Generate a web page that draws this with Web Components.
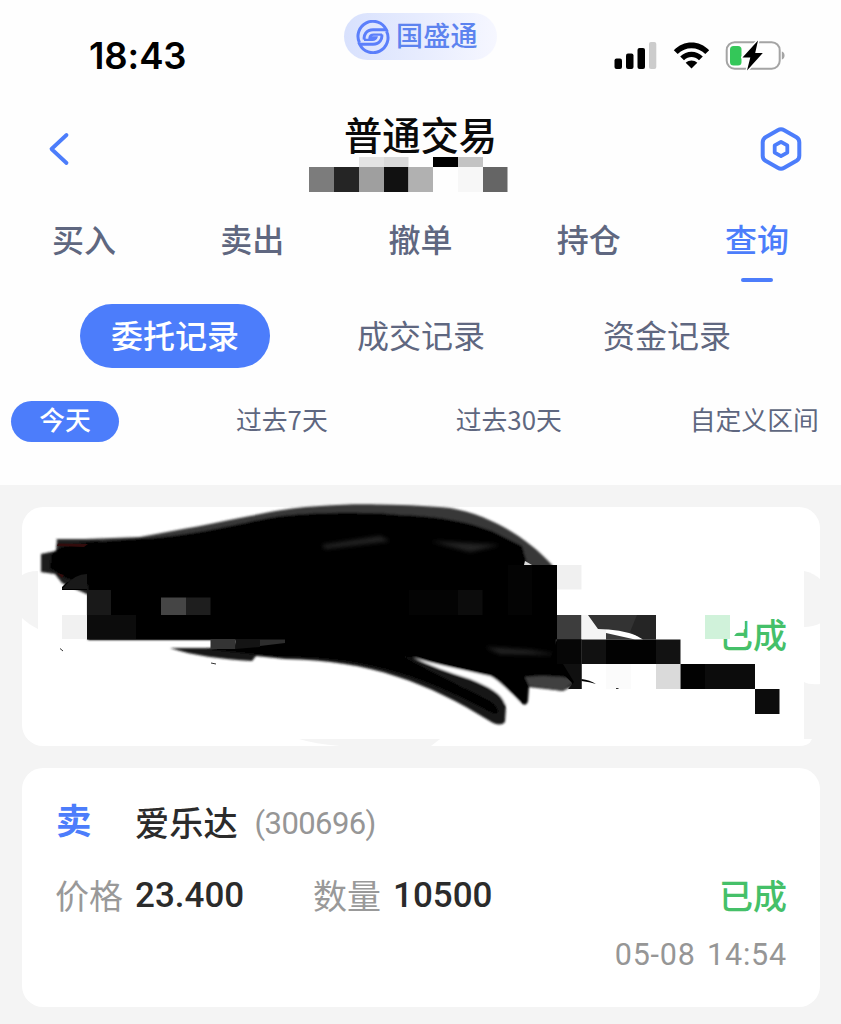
<!DOCTYPE html>
<html lang="zh-CN">
<head>
<meta charset="utf-8">
<title>普通交易</title>
<style>
  html, body { margin: 0; background: #f4f4f4; }
  body { width: 841px; height: 1024px; overflow: hidden; font-family: "Noto Sans CJK SC", sans-serif; }
</style>
</head>
<body>
<trade-app></trade-app>
<script>
/** <status-bar> — phone clock, brand pill and signal / wifi / battery. */
class StatusBar extends HTMLElement {
  constructor() { super(); this.attachShadow({ mode: "open" }); }
  connectedCallback() {
    this.shadowRoot.innerHTML = `
      <style>
        :host{display:grid;grid-template-columns:344px 153px 1fr;height:92px;box-sizing:border-box}
        .time{padding:34px 0 0 89px;font:600 36.5px/44px Inter,sans-serif;letter-spacing:-.1px;color:#000}
        .brand{display:flex;align-items:center;box-sizing:border-box;height:47px;margin-top:13px;padding-left:12px;gap:6px;border-radius:24px;
          background:linear-gradient(90deg,#d8e1fd,#e7ecfe 50%,#f6f7ff);color:#5d83ef;font-size:27px;font-weight:500;line-height:40px}
        .brand span{margin-top:-4px;letter-spacing:.3px}
        .icons{display:flex;align-items:flex-start;padding:41px 0 0 117px}
        svg{display:block}
        .wifi{margin-left:16px}.bat{margin-left:15px}
      </style>
      <div class="time">${this.getAttribute("time")}</div>
      <div class="brand">
        <svg width="34" height="34" viewBox="0 0 34 34" fill="none" stroke="#5b7ffb" stroke-width="3">
          <path d="M3.500 22.800A14.900 14.900 0 0 1 30.300 9.700H17C10 9.700 7.500 15.500 8.300 19.500"/>
          <path d="M3.500 22.800A14.900 14.900 0 0 1 30.300 9.700H17C10 9.700 7.500 15.500 8.300 19.500" transform="rotate(180 17 17)"/>
          <path stroke-width="2.300" d="M26 14.600H17.500C14.800 14.600 13.800 16 13.600 17.500H20.400C20 18.900 19.200 19.800 16.500 19.800H8"/>
        </svg>
        <span><slot></slot></span>
      </div>
      <div class="icons">
        <svg width="43" height="29" viewBox="0 0 43 29">
          <rect x="0.5" y="17.5" width="7.5" height="10.5" rx="2"/>
          <rect x="12" y="12.5" width="7.5" height="15.5" rx="2"/>
          <rect x="23.5" y="7" width="7.5" height="21" rx="2"/>
          <rect x="35" y="1" width="7.3" height="27" rx="2" fill="#ccc"/>
        </svg>
        <svg class="wifi" width="37" height="29" viewBox="0 0 37 29">
          <path d="M.8 9.2C10.5-1.2 26.500-1.2 36.200 9.2L32.300 13C24.700 5.200 12.300 5.200 4.700 13Z"/>
          <path d="M7.200 15.500C13.500 9 23.500 9 29.800 15.500L26 19.200C21.500 15 15.500 15 11 19.200Z"/>
          <path d="M12.700 21.800C16.200 18.800 20.800 18.800 24.300 21.800L18.500 27.600Z"/>
        </svg>
        <svg class="bat" width="61" height="32" viewBox="0 0 61 32" style="margin-top:-1px">
          <rect x="1.700" y="2.200" width="53" height="26.500" rx="8" fill="none" stroke="#a4a4a4" stroke-width="2"/>
          <path d="M56.800 11.500C60.500 12.500 60.500 18.500 56.800 19.500Z" fill="#a4a4a4"/>
          <rect x="5" y="6" width="11.500" height="19.500" rx="3.500" fill="#34c759"/>
          <path d="M33 .6 17.500 17.500H25.300L22 30.500 37.800 13H30.200Z" stroke="#fff" stroke-width="3" stroke-linejoin="round" paint-order="stroke"/>
        </svg>
      </div>`;
  }
}

/** <pixel-mosaic> — blocked out text. cells is a list of "x,y,w,h,fill" separated by spaces. */
class PixelMosaic extends HTMLElement {
  constructor() { super(); this.attachShadow({ mode: "open" }); }
  connectedCallback() {
    const cells = this.getAttribute("cells").trim().split(/\s+/).map((c) => {
      const [x, y, w, h, f] = c.split(",");
      return `<rect x="${x}" y="${y}" width="${w}" height="${h}" fill="${f}"/>`;
    }).join("");
    this.shadowRoot.innerHTML = `
      <style>:host{display:block}svg{display:block}</style>
      <svg width="223" height="35" viewBox="0 0 223 35">${cells}</svg>`;
  }
}

/** <title-bar> — back arrow, page title (default slot), account line and settings. */
class TitleBar extends HTMLElement {
  constructor() { super(); this.attachShadow({ mode: "open" }); }
  connectedCallback() {
    this.shadowRoot.innerHTML = `
      <style>
        :host{display:grid;grid-template-columns:309px 223px 1fr;height:112px}
        .back{padding:40px 0 0 48px}
        h1{margin:0;height:65px;padding-top:15px;box-sizing:border-box;width:223px;text-align:center;font-size:38.300px;line-height:54px;font-weight:500;color:#0a0a0a}
        .gear{padding:34px 0 0 227px}
        svg{display:block}
      </style>
      <div class="back"><svg width="22" height="34" viewBox="0 0 22 34" fill="none" stroke="#4c7dfb" stroke-width="3.800" stroke-linecap="round" stroke-linejoin="round"><path d="M18.500 3 3.500 17 18.500 31"/></svg></div>
      <div><h1><slot></slot></h1><slot name="account"></slot></div>
      <div class="gear">
        <svg width="44" height="46" viewBox="0 0 44 46" fill="none" stroke="#4c7dfb" stroke-linejoin="round">
          <path stroke-width="4" d="M18.800 4.200Q22 2.400 25.200 4.200L37.500 11.300Q40.300 13 40.300 16.300V29.700Q40.300 33 37.500 34.700L25.200 41.800Q22 43.600 18.800 41.800L6.500 34.700Q3.700 33 3.700 29.700V16.300Q3.700 13 6.500 11.300Z"/>
          <path stroke-width="3.800" d="M22 15.800 28.300 19.400V26.600L22 30.200 15.700 26.600V19.400Z"/>
        </svg>
      </div>`;
  }
}

/** <tab-row kind="main|sub|range" items="a,b,c" active="0"> */
class TabRow extends HTMLElement {
  constructor() { super(); this.attachShadow({ mode: "open" }); }
  connectedCallback() {
    const active = Number(this.getAttribute("active"));
    const items = this.getAttribute("items").split(",");
    this.shadowRoot.innerHTML = `
      <style>
        :host{display:flex;box-sizing:border-box;color:#5f6780}
        span{box-sizing:border-box;text-align:center;white-space:nowrap}
        :host([kind=main]){height:92px}
        :host([kind=main]) span{flex:1;font-size:32px;font-weight:500;line-height:46px;padding-top:11px}
        :host([kind=main]) .on{color:#4c7dfb}
        :host([kind=main]) .on::after{content:"";display:block;width:32px;height:4.500px;margin:16.500px auto 0;border-radius:3px;background:#4c7dfb}
        :host([kind=sub]){height:105px;padding:8px 51px 0 80px;gap:56px}
        :host([kind=sub]) span{width:190px;height:64px;border-radius:32px;font-size:32px;line-height:61px}
        :host([kind=range]){height:84px;padding-left:11px;gap:128px}
        :host([kind=range]) span{height:41px;font-size:25.800px;line-height:36px}
        :host([kind=range]) .on{width:108px;border-radius:21px;margin-right:-11px}
        :host(:not([kind=main])) .on{background:#4c7dfb;color:#fff;font-weight:500}
      </style>
      ${items.map((t, i) => `<span class="${i === active ? "on" : ""}">${t}</span>`).join("")}`;
  }
}

/** <order-card> — one order record; the "cover" slot lies over the card. */
class OrderCard extends HTMLElement {
  constructor() { super(); this.attachShadow({ mode: "open" }); }
  connectedCallback() {
    const a = (n) => this.getAttribute(n) || "";
    const masked = this.hasAttribute("masked");
    const head = masked ? "" : `<b class="side">${a("side")}</b><b class="name">${a("name")}</b><span class="code">(${a("code")})</span>`;
    const body = masked ? "" : `<span class="lab">价格</span><b class="num price">${a("price")}</b><span class="lab">数量</span><b class="num">${a("amount")}</b>`;
    this.shadowRoot.innerHTML = `
      <style>
        :host{display:block;position:relative;box-sizing:border-box;width:798px;height:238.500px;padding:25px 33px 0 33px;border-radius:21px;background:#fff;color:#2b2b2b}
        b{font-weight:500}
        .row{display:flex;align-items:center;height:56px}
        .side{width:80px;padding-left:1px;box-sizing:border-box;font-size:35.500px;font-weight:700;color:#4c7dfb;line-height:52px;margin-top:-5px}
        .name{font-size:34.200px}
        .code{margin:4px 0 0 17px;font:400 31px Roboto,sans-serif;letter-spacing:-.6px;color:#969696}
        .body{margin-top:17px}
        .lab{font-size:34px;font-weight:400;color:#999;width:80px}
        .num{font:500 35px Roboto,sans-serif;margin-top:3px}
        .price{width:178px}
        .state{margin-left:auto;font-size:34px;font-weight:500;color:#45c069}
        .when{margin-top:15px;height:36px;line-height:36px;text-align:right;font-family:Roboto,sans-serif;font-size:30.500px;color:#969696;letter-spacing:.8px;word-spacing:3px}
        .num{letter-spacing:0}
        ::slotted(svg){position:absolute;left:0;top:0;overflow:visible}
      </style>
      <div class="row">${head}</div>
      <div class="row body">${body}<span class="state">${a("state")}</span></div>
      <div class="when">${a("when")}</div>
      <slot name="cover"></slot>`;
  }
}

/** <trade-app> — the whole order query screen. */
class TradeApp extends HTMLElement {
  constructor() { super(); this.attachShadow({ mode: "open" }); }
  connectedCallback() {
    this.shadowRoot.innerHTML = `
      <style>
        :host{display:block;width:841px;height:1024px}
        header{background:#fefefe;height:485px}
        main{display:flex;flex-direction:column;gap:22.500px;padding:22px 0 0 22px}
      </style>
      <header>
        <status-bar time="18:43">国盛通</status-bar>
        <title-bar>普通交易
          <pixel-mosaic slot="account" cells="50,0,25,10,#e4e4e4 75,0,24.500,10,#dadada 124,0,25,10,#000 149,0,25,10,#c3c3c3 0,10,25,25,#7c7c7c 25,10,25,25,#252525 50,10,25,25,#9f9f9f 75,10,24.500,25,#111 99.500,10,24.500,25,#b1b1b1 149,10,25,25,#f7f7f7 174,10,24.500,25,#656565"></pixel-mosaic>
        </title-bar>
        <tab-row kind="main" items="买入,卖出,撤单,持仓,查询" active="4"></tab-row>
        <tab-row kind="sub" items="委托记录,成交记录,资金记录" active="0"></tab-row>
        <tab-row kind="range" items="今天,过去7天,过去30天,自定义区间" active="0"></tab-row>
      </header>
      <main>
        <order-card masked state="已成">
          <svg slot="cover" width="798" height="238" viewBox="22 507 798 238">
            <defs>
              <filter id="soft" x="-5%" y="-5%" width="110%" height="110%"><feGaussianBlur stdDeviation=".8"/></filter>
              <filter id="smear" x="-20%" y="-50%" width="140%" height="200%"><feGaussianBlur stdDeviation="2"/></filter>
            </defs>
            <!-- bites out of the card edge -->
            <g fill="#f4f4f4">
              <path d="M21 576Q27 571 38 571V629Q28 624 21 617Z"/>
              <path d="M804 571Q814 573 821 580V623Q813 627 804 627Z"/>
              <path d="M804 682Q809 685 821 684V746H808L812 739H804Z"/>
              <path d="M299 739H440L431 746H340Q315 744 299 739Z"/>
            </g>
            <!-- brush strokes -->
            <g filter="url(#soft)">
              <path fill="#383838" d="M56 539H85L140 537C180 530 220 522 250 516C275 511 295 507 320 506C345 504 365 504 380 504.500C410 505 430 506 450 508C492 515 530 540 553 566L520 580H90Z"/>
              <path fill="#1a1a1a" d="M41 554 56 551 57 540H100V600L62 583 55 574 41 572Z"/>
              <path d="M52 553 62 547 90 542 140 538.500C180 537 215 529 240 524C258 520 268 518 282 516C320 512 370 512 400 515C440 516 480 524 500 535L522 546 526 560V640H88V585L66 578 50 568Z"/>
              <path fill="#181818" d="M170 648H280L400 650C430 665 455 670 475 680C495 688 506 698 506 706L505 722Q500 728 488 720C430 684 370 660 285 659L256 656 252 661C220 659 195 656 170 648Z"/>
              <path d="M205 649 280 635H400V654C430 672 465 688 488 700C500 706 502 718 490 712C430 680 370 656 280 657Z"/>
              <path d="M385 658V636H557V660L580 682 563 691 529 687 528 701Q526 708 520 702C508 690 500 682 490 677C460 668 430 664 400 655Z"/>
              <path fill="#404040" d="M525 677Q550 674 577 679L563 691 529 686Z"/>
              <path fill="#fff" d="M412 657Q440 666 490 676C502 682 510 694 520 703L512 708 505 704C502 694 490 687 470 679Q437 669 412 657Z"/>
            </g>
            <path fill="#303030" opacity=".75" filter="url(#smear)" d="M322 545 380 536 390 541 325 549ZM430 541 500 545 470 552ZM485 647 530 650 560 655 500 654Z"/>
            <path fill="#320c0c" d="M58 543.500 88 544 84 547 57 546ZM57 573 64 575 62 578Z"/>
            <path fill="#ddd" d="M525 561 532 565H524Z"/>
            <!-- mosaic blocks -->
            <path d="M87 590H210V565H557V639.500H87ZM62 587 66 583 87 573V590H62Z"/>
            <path d="M557 639H581.500V689H572V683L550 660Z"/>
            <g fill="#191919">
              <path d="M65 586Q75 574 87 574V589H62Z"/>
              <path d="M87 590H111V615H87Z"/>
              <path fill="#0c0c0c" d="M87 615H136V639H87Z"/>
              <path fill="#454545" d="M161 597.500H186V615H161Z"/>
              <path fill="#1e1e1e" d="M186 597.500H210.500V615H186Z"/>
              <path fill="#f1f1f1" d="M62 615H87V639H62Z"/>
              <path fill="#343434" d="M210.500 639H235.500V649H210.500Z"/>
              <path fill="#141414" d="M235.500 639H260V647L235.500 649Z"/>
              <path fill="#2d2d2d" d="M260 639.500H285V643L260 646Z"/>
              <path fill="#040404" d="M409 590H458V615H409ZM508 565H532V615H508Z"/>
              <path fill="#0c0c0c" d="M458 590H482.500V615H458Z"/>
              <path fill="#f0f0f0" d="M557 565H581.500V589.500H557Z"/>
              <path fill="#3d3d3d" d="M557 615H581.500V639.500H557Z"/>
              <path fill="#f4f4f4" d="M581.500 615H606V639.500H581.500Z"/>
              <path fill="#333" d="M588 615H638V636Q620 629 598 629Z"/>
              <path fill="#252525" d="M637 615H656V639.500H643L630 632Z"/>
              <path fill="#3b3b3b" d="M606 633 635 639.500H606Z"/>
              <path fill="#060606" d="M557 639.500H581.500V664H557Z"/>
              <path fill="#111" d="M581.500 639.500H606V664H581.500Z"/>
              <path fill="#020202" d="M606 639.500H656V664H606Z"/>
              <path fill="#121212" d="M656 639.500H680.500V664H656Z"/>
              <path fill="#101010" d="M563 664H581.500V689H568L574 682Z"/>
              <path fill="#fbfbfb" d="M606 664H631V689H606Z"/>
              <path fill="#dadada" d="M656 664H680.500V689H656Z"/>
              <path fill="#020202" d="M680.500 664H705V689H680.500Z"/>
              <path fill="#0c0c0c" d="M705 664H755V689H705ZM755 689H779.500V714H755Z"/>
            </g>
            <path d="M60 648.500 63 651M211 663 216 664M616 688.500H618.500" stroke="#333" fill="none"/>
            <path d="M581.500 679Q590 680 596 684Q590 682 581.500 681Z"/>
            <!-- status label is partly wiped -->
            <path fill="#fff" d="M715 614H752V620L744.800 621V629L736 633.500 733 637.500 729 638.500H715Z"/>
            <path fill="#d0f2da" d="M705 615H730V639H705Z"/>
          </svg>
        </order-card>
        <order-card side="卖" name="爱乐达" code="300696" price="23.400" amount="10500" state="已成" when="05-08 14:54"></order-card>
      </main>`;
  }
}

customElements.define("status-bar", StatusBar);
customElements.define("pixel-mosaic", PixelMosaic);
customElements.define("title-bar", TitleBar);
customElements.define("tab-row", TabRow);
customElements.define("order-card", OrderCard);
customElements.define("trade-app", TradeApp);
</script>
</body>
</html>
